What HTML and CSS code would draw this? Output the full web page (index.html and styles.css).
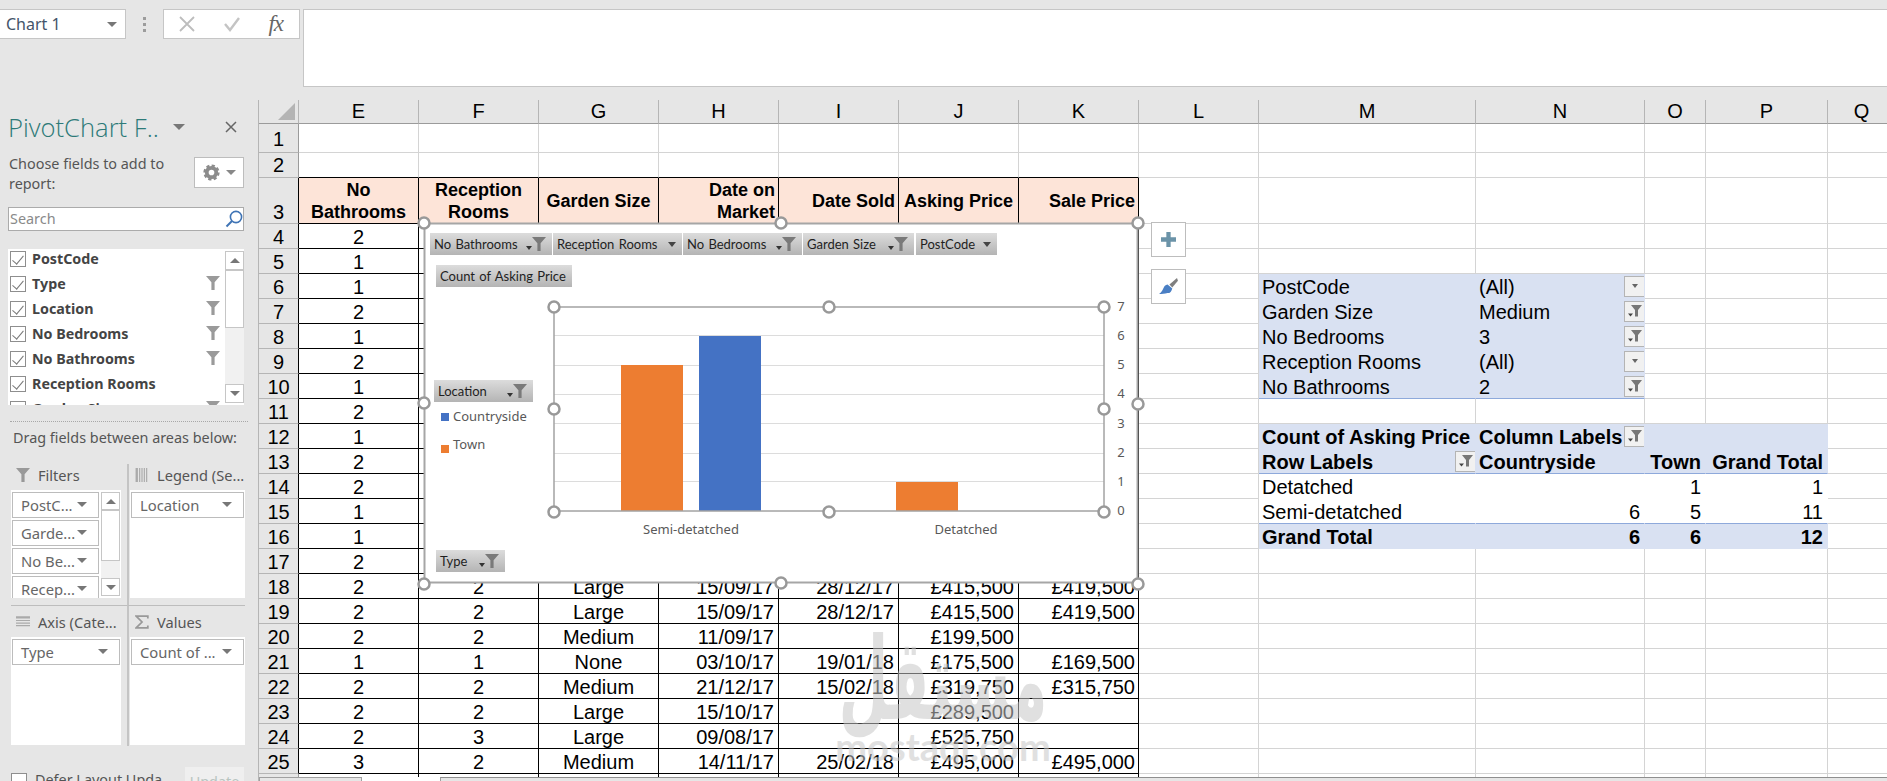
FILE: index.html
```html
<!DOCTYPE html>
<html lang="en">
<head>
<meta charset="utf-8">
<title>PivotChart</title>
<link rel="stylesheet" href="styles.css">
</head>
<body>
<svg class="defs" width="0" height="0" aria-hidden="true">
  <symbol id="funnel" viewBox="0 0 14 14"><path d="M0 0H14L8.6 6.2V14H5.4V6.2Z"/></symbol>
  <symbol id="filt" viewBox="0 0 14 14"><path d="M3 1H14L10 6V12.5H7V6Z" fill="#777"/><path d="M0 9.5H5L2.5 12.5Z" fill="#444"/></symbol>
</svg>
<header class="fbar">
  <div class="namebox"><span>Chart 1</span><i class="tri"></i></div>
  <div class="grip"><b></b><b></b><b></b></div>
  <div class="fxbox">
    <svg class="fxi" viewBox="0 0 16 16"><path d="M1 1L15 15M15 1L1 15" stroke="#bdbdbd" stroke-width="1.8" fill="none"/></svg>
    <svg class="fxi" viewBox="0 0 16 16"><path d="M1 8L6 14L15 2" stroke="#c4c4c4" stroke-width="2.4" fill="none"/></svg>
    <span class="fx">fx</span>
  </div>
  <div class="finput"></div>
</header>
<main class="main">
  <aside class="panel">
    <div class="ptitle"><span>PivotChart F..</span><i class="tri big"></i><svg class="close" viewBox="0 0 12 12"><path d="M1 1L11 11M11 1L1 11" stroke="#666" stroke-width="1.5"/></svg></div>
    <div class="pintro">
      <p>Choose fields to add to report:</p>
      <div class="gear">
        <svg viewBox="0 0 18 18" width="17" height="17"><circle cx="9" cy="9" r="5" fill="none" stroke="#8c8c8c" stroke-width="4"/><circle cx="9" cy="9" r="7.4" fill="none" stroke="#8c8c8c" stroke-width="2.4" stroke-dasharray="3.4 2.4"/></svg>
        <i class="tri"></i>
      </div>
    </div>
    <div class="search"><span>Search</span><svg viewBox="0 0 18 18" width="18" height="18"><circle cx="11" cy="7" r="5.6" fill="none" stroke="#3f74b5" stroke-width="1.6"/><path d="M7 11L1.5 16.5" stroke="#3f74b5" stroke-width="2"/></svg></div>
    <div class="flist">
      <div class="frows">
        <div class="frow"><i class="cb"></i><span>PostCode</span></div>
        <div class="frow"><i class="cb"></i><span>Type</span><svg class="fun"><use href="#funnel"/></svg></div>
        <div class="frow"><i class="cb"></i><span>Location</span><svg class="fun"><use href="#funnel"/></svg></div>
        <div class="frow"><i class="cb"></i><span>No Bedrooms</span><svg class="fun"><use href="#funnel"/></svg></div>
        <div class="frow"><i class="cb"></i><span>No Bathrooms</span><svg class="fun"><use href="#funnel"/></svg></div>
        <div class="frow"><i class="cb"></i><span>Reception Rooms</span></div>
        <div class="frow"><i class="cb"></i><span>Garden Size</span><svg class="fun"><use href="#funnel"/></svg></div>
      </div>
      <div class="vs vs-list"><b class="sb"><i class="up"></i></b><b class="th"></b><b class="sp"></b><b class="sb"><i class="tri"></i></b></div>
    </div>
    <div class="dots"></div>
    <div class="drag">Drag fields between areas below:</div>
    <div class="areas">
      <section class="area a-top">
        <h3><svg class="ai" viewBox="0 0 14 14"><path d="M0 0H14L8.6 6.2V14H5.4V6.2Z" fill="#999"/></svg>Filters</h3>
        <div class="abox split">
          <div class="items">
            <div class="item"><span>PostC...</span><i class="tri"></i></div>
            <div class="item"><span>Garde...</span><i class="tri"></i></div>
            <div class="item"><span>No Be...</span><i class="tri"></i></div>
            <div class="item"><span>Recep...</span><i class="tri"></i></div>
          </div>
          <div class="vs vs-area"><b class="sb"><i class="up"></i></b><b class="th"></b><b class="sp"></b><b class="sb"><i class="tri"></i></b></div>
        </div>
      </section>
      <section class="area a-top r">
        <h3><svg class="ai" viewBox="0 0 11 12"><path d="M0 0H2V12H0ZM3 0H4V12H3ZM5 0H6V12H5ZM7 0H8V12H7ZM9 0H10V12H9Z" fill="#aaa"/></svg>Legend (Se...</h3>
        <div class="abox"><div class="item"><span>Location</span><i class="tri"></i></div></div>
      </section>
      <section class="area a-bot">
        <h3><svg class="ai" viewBox="0 0 12 10"><path d="M0 0H12V2H0ZM0 3.2H12V4.2H0ZM0 5.4H12V6.4H0ZM0 7.6H12V8.6H0Z" fill="#aaa"/></svg>Axis (Cate...</h3>
        <div class="abox"><div class="item"><span>Type</span><i class="tri"></i></div></div>
      </section>
      <section class="area a-bot r">
        <h3><svg class="ai" viewBox="0 0 12 12"><path d="M11 3V1H1L6 6L1 11H11V9" fill="none" stroke="#999" stroke-width="1.5"/></svg>Values</h3>
        <div class="abox"><div class="item"><span>Count of ...</span><i class="tri"></i></div></div>
      </section>
    </div>
    <div class="defer"><i class="cb empty"></i><span>Defer Layout Upda</span><button class="upd">Update</button></div>
  </aside>
  <section class="sheet">
    <table class="grid">
      <colgroup><col class="c-rh"><col class="c-n"><col class="c-n"><col class="c-n"><col class="c-n"><col class="c-n"><col class="c-n"><col class="c-n"><col class="c-n"><col class="c-m"><col class="c-nn"><col class="c-o"><col class="c-p"><col class="c-q"></colgroup>
      <tr class="hdr"><th class="rh corner"><i></i></th><th>E</th><th>F</th><th>G</th><th>H</th><th>I</th><th>J</th><th>K</th><th>L</th><th>M</th><th>N</th><th>O</th><th>P</th><th>Q</th></tr>
      <tr class="r1"><th class="rh">1</th><td></td><td></td><td></td><td></td><td></td><td></td><td></td><td></td><td></td><td></td><td></td><td></td><td></td></tr>
      <tr><th class="rh">2</th><td class="t"></td><td class="t"></td><td class="t"></td><td class="t"></td><td class="t"></td><td class="t"></td><td class="t"></td><td></td><td></td><td></td><td></td><td></td><td></td></tr>
      <tr class="r3"><th class="rh k">3</th><td class="h c">No Bathrooms</td><td class="h c">Reception Rooms</td><td class="h c">Garden Size</td><td class="h e">Date on Market</td><td class="h e">Date Sold</td><td class="h c">Asking Price</td><td class="h e">Sale Price</td><td></td><td></td><td></td><td></td><td></td><td></td></tr>
      <tr><th class="rh k">4</th><td class="d c">2</td><td class="d"></td><td class="d"></td><td class="d"></td><td class="d"></td><td class="d"></td><td class="d"></td><td></td><td></td><td></td><td></td><td></td><td></td></tr>
      <tr><th class="rh k">5</th><td class="d c">1</td><td class="d"></td><td class="d"></td><td class="d"></td><td class="d"></td><td class="d"></td><td class="d"></td><td></td><td></td><td></td><td></td><td></td><td></td></tr>
      <tr><th class="rh k">6</th><td class="d c">1</td><td class="d"></td><td class="d"></td><td class="d"></td><td class="d"></td><td class="d"></td><td class="d"></td><td></td><td class="pf">PostCode</td><td class="pf"><div class="nf"><span>(All)</span><i class="fb"><i class="tri tiny"></i></i></div></td><td></td><td></td><td></td></tr>
      <tr><th class="rh k">7</th><td class="d c">2</td><td class="d"></td><td class="d"></td><td class="d"></td><td class="d"></td><td class="d"></td><td class="d"></td><td></td><td class="pf">Garden Size</td><td class="pf"><div class="nf"><span>Medium</span><i class="fb"><svg class="ff"><use href="#filt"/></svg></i></div></td><td></td><td></td><td></td></tr>
      <tr><th class="rh k">8</th><td class="d c">1</td><td class="d"></td><td class="d"></td><td class="d"></td><td class="d"></td><td class="d"></td><td class="d"></td><td></td><td class="pf">No Bedrooms</td><td class="pf"><div class="nf"><span>3</span><i class="fb"><svg class="ff"><use href="#filt"/></svg></i></div></td><td></td><td></td><td></td></tr>
      <tr><th class="rh k">9</th><td class="d c">2</td><td class="d"></td><td class="d"></td><td class="d"></td><td class="d"></td><td class="d"></td><td class="d"></td><td></td><td class="pf">Reception Rooms</td><td class="pf"><div class="nf"><span>(All)</span><i class="fb"><i class="tri tiny"></i></i></div></td><td></td><td></td><td></td></tr>
      <tr><th class="rh k">10</th><td class="d c">1</td><td class="d"></td><td class="d"></td><td class="d"></td><td class="d"></td><td class="d"></td><td class="d"></td><td></td><td class="pf bl">No Bathrooms</td><td class="pf bl"><div class="nf"><span>2</span><i class="fb"><svg class="ff"><use href="#filt"/></svg></i></div></td><td></td><td></td><td></td></tr>
      <tr><th class="rh k">11</th><td class="d c">2</td><td class="d"></td><td class="d"></td><td class="d"></td><td class="d"></td><td class="d"></td><td class="d"></td><td></td><td></td><td></td><td></td><td></td><td></td></tr>
      <tr><th class="rh k">12</th><td class="d c">1</td><td class="d"></td><td class="d"></td><td class="d"></td><td class="d"></td><td class="d"></td><td class="d"></td><td></td><td class="pf b">Count of Asking Price</td><td class="pf b"><div class="nf"><span>Column Labels</span><i class="fb"><svg class="ff"><use href="#filt"/></svg></i></div></td><td class="pf"></td><td class="pf"></td><td></td></tr>
      <tr><th class="rh k">13</th><td class="d c">2</td><td class="d"></td><td class="d"></td><td class="d"></td><td class="d"></td><td class="d"></td><td class="d"></td><td></td><td class="pf b bl"><div class="nf"><span>Row Labels</span><i class="fb"><svg class="ff"><use href="#filt"/></svg></i></div></td><td class="pf b bl">Countryside</td><td class="pf b bl e">Town</td><td class="pf b bl e">Grand Total</td><td></td></tr>
      <tr><th class="rh k">14</th><td class="d c">2</td><td class="d"></td><td class="d"></td><td class="d"></td><td class="d"></td><td class="d"></td><td class="d"></td><td></td><td class="pw">Detatched</td><td class="pw"></td><td class="pw e">1</td><td class="pw e">1</td><td></td></tr>
      <tr><th class="rh k">15</th><td class="d c">1</td><td class="d"></td><td class="d"></td><td class="d"></td><td class="d"></td><td class="d"></td><td class="d"></td><td></td><td class="pw bl">Semi-detatched</td><td class="pw bl e">6</td><td class="pw bl e">5</td><td class="pw bl e">11</td><td></td></tr>
      <tr><th class="rh k">16</th><td class="d c">1</td><td class="d"></td><td class="d"></td><td class="d"></td><td class="d"></td><td class="d"></td><td class="d"></td><td></td><td class="pf b">Grand Total</td><td class="pf b e">6</td><td class="pf b e">6</td><td class="pf b e">12</td><td></td></tr>
      <tr><th class="rh k">17</th><td class="d c">2</td><td class="d"></td><td class="d"></td><td class="d"></td><td class="d"></td><td class="d"></td><td class="d"></td><td></td><td></td><td></td><td></td><td></td><td></td></tr>
      <tr><th class="rh k">18</th><td class="d c">2</td><td class="d c">2</td><td class="d c">Large</td><td class="d e">15/09/17</td><td class="d e">28/12/17</td><td class="d e">£415,500</td><td class="d e s">£419,500</td><td></td><td></td><td></td><td></td><td></td><td></td></tr>
      <tr><th class="rh k">19</th><td class="d c">2</td><td class="d c">2</td><td class="d c">Large</td><td class="d e">15/09/17</td><td class="d e">28/12/17</td><td class="d e">£415,500</td><td class="d e s">£419,500</td><td></td><td></td><td></td><td></td><td></td><td></td></tr>
      <tr><th class="rh k">20</th><td class="d c">2</td><td class="d c">2</td><td class="d c">Medium</td><td class="d e">11/09/17</td><td class="d e"></td><td class="d e">£199,500</td><td class="d e s"></td><td></td><td></td><td></td><td></td><td></td><td></td></tr>
      <tr><th class="rh k">21</th><td class="d c">1</td><td class="d c">1</td><td class="d c">None</td><td class="d e">03/10/17</td><td class="d e">19/01/18</td><td class="d e">£175,500</td><td class="d e s">£169,500</td><td></td><td></td><td></td><td></td><td></td><td></td></tr>
      <tr><th class="rh k">22</th><td class="d c">2</td><td class="d c">2</td><td class="d c">Medium</td><td class="d e">21/12/17</td><td class="d e">15/02/18</td><td class="d e">£319,750</td><td class="d e s">£315,750</td><td></td><td></td><td></td><td></td><td></td><td></td></tr>
      <tr><th class="rh k">23</th><td class="d c">2</td><td class="d c">2</td><td class="d c">Large</td><td class="d e">15/10/17</td><td class="d e"></td><td class="d e">£289,500</td><td class="d e s"></td><td></td><td></td><td></td><td></td><td></td><td></td></tr>
      <tr><th class="rh k">24</th><td class="d c">2</td><td class="d c">3</td><td class="d c">Large</td><td class="d e">09/08/17</td><td class="d e"></td><td class="d e">£525,750</td><td class="d e s"></td><td></td><td></td><td></td><td></td><td></td><td></td></tr>
      <tr><th class="rh k">25</th><td class="d c">3</td><td class="d c">2</td><td class="d c">Medium</td><td class="d e">14/11/17</td><td class="d e">25/02/18</td><td class="d e">£495,000</td><td class="d e s">£495,000</td><td></td><td></td><td></td><td></td><td></td><td></td></tr>
      <tr><th class="rh"></th><td class="d"></td><td class="d"></td><td class="d"></td><td class="d"></td><td class="d"></td><td class="d"></td><td class="d"></td><td></td><td></td><td></td><td></td><td></td><td></td></tr>
    </table>

    <div class="wm"><span class="wm-ar">مستقل</span><span class="wm-en">mostaql.com</span></div>

    <div class="chart">
      <svg class="plot" viewBox="424 223 714 360">
        <g class="gl">
          <path d="M554 335.5H1104M554 365.5H1104M554 394.5H1104M554 423.5H1104M554 453.5H1104M554 481.5H1104"/>
        </g>
        <rect class="o" x="621" y="365" width="62" height="146"/>
        <rect class="bl" x="699" y="336" width="62" height="175"/>
        <rect class="o" x="896" y="482" width="62" height="29"/>
        <rect class="o" x="441" y="445" width="8" height="8"/>
        <rect class="bl" x="441" y="413" width="8" height="8"/>
        <rect class="pa" x="554" y="307" width="550" height="204"/>
        <text x="453" y="421">Countryside</text>
        <text x="453" y="449">Town</text>
        <text x="691" y="534" text-anchor="middle">Semi-detatched</text>
        <text x="966" y="534" text-anchor="middle">Detatched</text>
        <g text-anchor="middle">
          <text x="1121" y="311">7</text><text x="1121" y="340">6</text><text x="1121" y="369">5</text><text x="1121" y="398">4</text><text x="1121" y="428">3</text><text x="1121" y="457">2</text><text x="1121" y="486">1</text><text x="1121" y="515">0</text>
        </g>
        <rect class="box" x="424.5" y="223.5" width="713" height="359"/>
        <g class="hd">
          <circle cx="424" cy="223" r="5.5"/><circle cx="781" cy="223" r="5.5"/><circle cx="1138" cy="223" r="5.5"/>
          <circle cx="424" cy="403" r="5.5"/><circle cx="1138" cy="404" r="5.5"/>
          <circle cx="424" cy="584" r="5.5"/><circle cx="781" cy="583" r="5.5"/><circle cx="1138" cy="584" r="5.5"/>
          <circle cx="554" cy="307" r="5.5"/><circle cx="829" cy="307" r="5.5"/><circle cx="1104" cy="307" r="5.5"/>
          <circle cx="554" cy="409" r="5.5"/><circle cx="1104" cy="409" r="5.5"/>
          <circle cx="554" cy="512" r="5.5"/><circle cx="829" cy="512" r="5.5"/><circle cx="1104" cy="512" r="5.5"/>
        </g>
      </svg>
      <div class="cbtns">
        <div class="cbtn w1"><span>No Bathrooms</span><i class="mk"><i class="tri sm"></i><svg class="cf"><use href="#funnel"/></svg></i></div>
        <div class="cbtn w2"><span>Reception Rooms</span><i class="mk"><i class="tri dk"></i></i></div>
        <div class="cbtn w3"><span>No Bedrooms</span><i class="mk"><i class="tri sm"></i><svg class="cf"><use href="#funnel"/></svg></i></div>
        <div class="cbtn w4"><span>Garden Size</span><i class="mk"><i class="tri sm"></i><svg class="cf"><use href="#funnel"/></svg></i></div>
        <div class="cbtn w5"><span>PostCode</span><i class="mk"><i class="tri dk"></i></i></div>
      </div>
      <div class="cbtn fl-count"><span>Count of Asking Price</span></div>
      <div class="cbtn fl-loc"><span>Location</span><i class="mk"><i class="tri sm"></i><svg class="cf"><use href="#funnel"/></svg></i></div>
      <div class="cbtn fl-type"><span>Type</span><i class="mk"><i class="tri sm"></i><svg class="cf"><use href="#funnel"/></svg></i></div>
    </div>

    <div class="tool t-plus"><svg viewBox="0 0 14 14" width="15" height="15"><path d="M5 0H9V5H14V9H9V14H5V9H0V5H5Z" fill="#6b93a8"/></svg></div>
    <div class="tool t-brush"><svg viewBox="0 0 20 18" width="19" height="17"><path d="M19 0L20 3L14 10L11 7Z" fill="#7f7f7f"/><path d="M9 7L14 11C13 14 12 16 9 16C6 17 3 17 0 17C3 15 4 12 5 10C6 8 8 7 9 7Z" fill="#4a7fc4"/></svg></div>

    <div class="hscroll"><div class="tabs"></div><div class="track"></div></div>
  </section>
</main>
</body>
</html>
```
FILE: styles.css
```css
* { box-sizing: border-box; }
html, body { margin: 0; padding: 0; height: 100%; overflow: hidden; }
body { background: #e6e6e6; font-family: "Noto Sans", sans-serif; color: #444; width: 1887px; height: 781px; }
.defs { position: absolute; }
i { font-style: normal; display: block; }

.tri { width: 0; height: 0; border-left: 5px solid transparent; border-right: 5px solid transparent; border-top: 5px solid #777; flex: none; }
.tri.big { border-left-width: 6px; border-right-width: 6px; border-top-width: 6px; }
.tri.tiny { border-left-width: 3.5px; border-right-width: 3.5px; border-top-width: 4px; border-top-color: #666; }
.tri.dk { border-left-width: 4.5px; border-right-width: 4.5px; border-top-width: 5px; border-top-color: #444; }
.tri.sm { border-left-width: 3.5px; border-right-width: 3.5px; border-top-width: 4px; border-top-color: #333; margin-top: 7px; }

/* formula bar */
.fbar { height: 100px; display: flex; align-items: flex-start; padding-top: 9px; }
.namebox { width: 126px; height: 30px; background: #fff; border: 1px solid #c6c6c6; border-left: 0; display: flex; align-items: center; justify-content: space-between; padding: 0 8px 0 6px; font-size: 16px; color: #44546a; }
.grip { width: 37px; height: 30px; display: flex; flex-direction: column; align-items: center; justify-content: center; gap: 3px; }
.grip b { width: 3px; height: 3px; background: #9c9c9c; }
.fxbox { width: 137px; height: 30px; background: #fff; border: 1px solid #c6c6c6; display: flex; align-items: center; padding: 0 16px 0 15px; justify-content: space-between; }
.fxi { width: 16px; height: 16px; }
.fx { font-family: "Liberation Serif", serif; font-style: italic; font-size: 23px; line-height: 26px; color: #666; letter-spacing: -1px; }
.finput { margin-left: 3px; flex: 1; height: 78px; background: #fff; border: 1px solid #c6c6c6; border-right: 0; }

.main { display: flex; height: 681px; }

/* panel */
.panel { width: 259px; height: 681px; flex: none; border-right: 1px solid #b5b5b5; overflow: hidden; padding-left: 8px; position: relative; }
.ptitle { margin-top: 14px; height: 28px; display: flex; align-items: center; width: 237px; color: #2d7a78; font-size: 25.6px; font-weight: 300; font-family: "Open Sans", sans-serif; line-height: 28px; }
.ptitle span { width: 165px; white-space: nowrap; }
.ptitle .tri { margin-top: -2px; }
.close { width: 12px; height: 12px; margin-left: 40px; margin-top: -2px; }
.pintro { margin-top: 12px; display: flex; justify-content: space-between; width: 236px; font-size: 14.4px; line-height: 20px; color: #555; }
.pintro p { margin: 0; padding-left: 1px; width: 170px; }
.gear { width: 50px; height: 31px; margin-top: 3px; background: #fff; border: 1px solid #bdbdbd; display: flex; align-items: center; justify-content: center; gap: 6px; }
.gear .tri { border-top-color: #888; }
.search { margin-top: 13px; width: 236px; height: 24px; background: #fff; border: 1px solid #ababab; display: flex; align-items: center; justify-content: space-between; padding: 0 0 2px 1px; font-size: 14.4px; color: #8a8a8a; }
.search svg { margin-top: 2px; }
.flist { margin-top: 18px; width: 236px; height: 156px; background: #fff; overflow: hidden; display: flex; position: relative; }
.frows { width: 217px; margin-top: -3px; }
.frow { height: 25px; display: flex; align-items: center; padding-left: 2px; font-size: 14.3px; font-weight: 700; color: #444; position: relative; }
.frow span { margin-left: 6px; }
.cb { width: 16px; height: 16px; background: #fff; border: 1px solid #8e8e8e; position: relative; flex: none; }
.cb::after { content: ""; position: absolute; left: 4px; top: 1px; width: 5px; height: 10px; border: solid #777; border-width: 0 1.5px 1.5px 0; transform: rotate(40deg); }
.cb.empty::after { display: none; }
.fun { position: absolute; left: 198px; top: 5px; width: 14px; height: 14px; fill: #9a9a9a; }
.vs { display: flex; flex-direction: column; align-items: stretch; }
.vs b { display: flex; align-items: center; justify-content: center; background: #fff; border: 1px solid #c6c6c6; }
.vs .sp { background: #f1f1f1; border: 0; flex: 1; }
.vs .up { width: 0; height: 0; border-left: 5px solid transparent; border-right: 5px solid transparent; border-bottom: 5px solid #777; }
.vs-list { width: 19px; margin-top: 2px; margin-bottom: 2px; }
.vs-list .sb { height: 19px; }
.vs-list .th { height: 58px; }
.dots { margin-top: 16px; width: 238px; margin-left: 2px; border-top: 1px dotted #a8a8a8; }
.drag { margin-left: 5px; height: 21px; margin-top: 5px; font-size: 14.4px; line-height: 21px; color: #555; white-space: nowrap; }
.areas { margin-top: 16px; margin-left: 3px; width: 234px; display: grid; grid-template-columns: 116px 118px; grid-template-rows: 141px 141px; }
.area { font-size: 14.6px; color: #555; }
.area.r { border-left: 2px solid #c4c4c4; padding-left: 1px; }
.area.a-bot { border-top: 1px solid #bdbdbd; }
.area h3 { margin: 0; font-size: 14.6px; font-weight: 400; display: flex; align-items: center; padding-left: 5px; white-space: nowrap; }
.a-top h3 { height: 26px; padding-bottom: 4px; }
.a-bot h3 { height: 31px; padding-top: 1px; }
.ai { width: 14px; height: 14px; margin-right: 8px; flex: none; }
.abox { background: #fff; width: 115px; height: 108px; padding: 2px 1px; overflow: hidden; }
.a-top:not(.r) .abox, .a-bot:not(.r) .abox { width: 110px; }
.abox.split { display: flex; gap: 2px; }
.items { width: 87px; flex: none; }
.item { height: 26px; border: 1px solid #bcbcbc; background: #fff; display: flex; align-items: center; justify-content: space-between; padding: 0 11px 1px 8px; margin-bottom: 2px; font-size: 14.8px; color: #666; white-space: nowrap; }
.vs-area { width: 19px; height: 104px; }
.vs-area .sb { height: 18px; }
.vs-area .th { height: 51px; }
.defer { margin-top: 27px; margin-left: 3px; width: 233px; display: flex; font-size: 14.4px; color: #555; height: 40px; position: relative; white-space: nowrap; }
.defer span { margin-left: 8px; line-height: 14px; }
.upd { position: absolute; left: 174px; top: -6px; width: 59px; height: 28px; border: 0; background: #efefef; color: #b8c4c0; font: 14.4px "Noto Sans", sans-serif; padding: 0; }

/* sheet */
.sheet { flex: 1; position: relative; overflow: hidden; background: #fff; }
.grid { border-collapse: separate; border-spacing: 0; table-layout: fixed; width: 1637px; font-family: "Liberation Sans", sans-serif; font-size: 20px; color: #000; }
.c-rh { width: 40px; }
.c-n { width: 120px; }
.c-m { width: 217px; }
.c-nn { width: 169px; }
.c-o { width: 61px; }
.c-p { width: 122px; }
.c-q { width: 68px; }
.grid tr { height: 25px; }
.grid tr.hdr { height: 24px; }
.grid tr.r1 { height: 29px; }
.grid tr.r3 { height: 46px; }
th, td { padding: 0; font-weight: 400; line-height: 24px; vertical-align: bottom; white-space: nowrap; overflow: hidden; border-right: 1px solid #d4d4d4; border-bottom: 1px solid #d4d4d4; }
td, .rh.k { padding-top: 2px; line-height: 22px; }
.hdr th { background: #e6e6e6; border-bottom: 1px solid #9b9b9b; border-right: 1px solid #b5b5b5; text-align: center; line-height: 23px; }
.rh { background: #e6e6e6; border-left: 0; border-right: 1px solid #9b9b9b; border-bottom: 1px solid #b5b5b5; text-align: center; }
.r1 .rh { padding-bottom: 1px; }
.rh.k { border-right-color: #000; }
.corner { position: relative; }
.corner i { position: absolute; right: 3px; bottom: 3px; width: 0; height: 0; border-left: 17px solid transparent; border-bottom: 17px solid #b4b4b4; }
td.t { border-bottom-color: #000; }
td.h { background: #fde4d8; font-size: 18px; font-weight: 700; line-height: 22px; white-space: normal; border-right-color: #000; border-bottom-color: #000; padding: 1px 3px 0; vertical-align: middle; }
td.d { border-right-color: #000; border-bottom-color: #000; }
.c { text-align: center; }
.e { text-align: right; padding-right: 4px; }
td.s { padding-right: 3px; }
td.pf { background: #d9e1f2; border-right-color: #d9e1f2; border-bottom-color: #d9e1f2; padding-left: 3px; }
td.pw { border-right-color: #fff; border-bottom-color: #fff; padding-left: 3px; }
td.bl { border-bottom-color: #8ea9db; }
td.pf.e, td.pw.e { padding-left: 0; padding-right: 4px; }
td.b { font-weight: 700; }
.nf { display: flex; justify-content: space-between; align-items: center; height: 24px; margin-top: -2px; }
.nf span { padding-top: 2px; }
.fb { width: 21px; height: 21px; background: #f1f1f1; border: 1px solid #b4b4b4; display: flex; align-items: center; justify-content: center; flex: none; margin-right: -1px; }
.ff { width: 14px; height: 14px; }

/* watermark */
.wm { position: absolute; left: 582px; top: 543px; width: 204px; display: flex; flex-direction: column; align-items: center; color: #c8c8c8; opacity: .55; pointer-events: none; }
.wm-ar { font-family: "DejaVu Sans", sans-serif; font-weight: 700; font-size: 57px; line-height: 72px; white-space: nowrap; transform: scaleY(2); }
.wm-en { font-family: "Lato", sans-serif; font-weight: 700; font-size: 38px; line-height: 30px; margin-top: 16px; white-space: nowrap; }

/* chart */
.chart { position: absolute; left: 165px; top: 123px; width: 714px; height: 360px; background: #fff; }
.plot { position: absolute; left: 0; top: 0; width: 714px; height: 360px; overflow: visible; font-family: "Noto Sans", sans-serif; font-size: 13px; fill: #595959; }
.gl path { stroke: #dcdcdc; fill: none; }
.plot .o { fill: #ed7d31; }
.plot .bl { fill: #4472c4; }
.plot .pa { fill: none; stroke: #a3a3a3; stroke-width: 1.5; }
.plot .box { fill: none; stroke: #a6a6a6; stroke-width: 2; }
.hd circle { fill: #fff; stroke: #999; stroke-width: 2.5; }
.cbtns { position: absolute; left: 6px; top: 10px; display: flex; gap: 1px; }
.cbtn { height: 22px; background: linear-gradient(#dcdcdc, #b4b4b4); display: flex; align-items: center; justify-content: space-between; padding: 0 6px 0 4px; font-family: "Lato", sans-serif; font-size: 13px; color: #1f1f1f; word-spacing: 1px; white-space: nowrap; }
.w1 { width: 122px; }
.w2 { width: 129px; }
.w3 { width: 119px; }
.w4 { width: 111px; margin-right: 1px; }
.w5 { width: 81px; }
.mk { display: flex; align-items: center; }
.cf { width: 14px; height: 14px; fill: #7a7a7a; }
.fl-count { position: absolute; left: 12px; top: 42px; width: 136px; }
.fl-loc { position: absolute; left: 10px; top: 157px; width: 99px; }
.fl-type { position: absolute; left: 12px; top: 327px; width: 69px; }
.tool { position: absolute; width: 35px; height: 35px; background: #fff; border: 1px solid #bdbdbd; display: flex; align-items: center; justify-content: center; }
.t-plus { left: 892px; top: 122px; }
.t-brush { left: 892px; top: 169px; }

/* bottom */
.hscroll { position: absolute; left: 0; right: 0; top: 677px; height: 4px; display: flex; gap: 78px; background: #fff; }
.tabs { width: 103px; background: #e6e6e6; border: 1px solid #a0a0a0; border-bottom: 0; }
.track { flex: 1; background: #e6e6e6; border-top: 1px solid #8f8f8f; border-left: 1px solid #a0a0a0; }
```
